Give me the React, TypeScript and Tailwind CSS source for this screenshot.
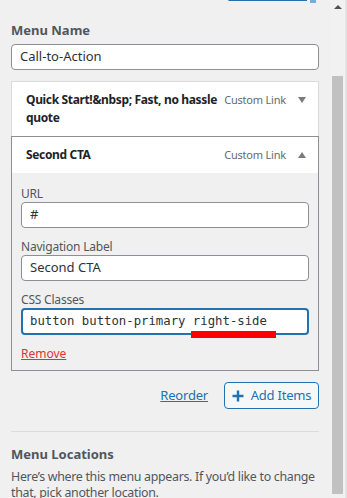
import React from "react";

const font = { fontFamily: '"Noto Sans", "Open Sans", sans-serif' };

const Field = ({ label, value, focused, mono }: { label: string; value: string; focused?: boolean; mono?: boolean }) => (
  <div className="flex flex-col">
    <label className="text-[12px] leading-[16px] text-[#50575e] tracking-[-0.2px]">{label}</label>
    <div
      className={
        "relative shrink-0 rounded-[4px] bg-white flex items-center text-[13px] text-[#2c3338] " +
        (focused ? "h-[27px] border-2 border-[#2271b1] pl-[7px]" : "h-[26px] border border-[#8c8f94] pl-[8px]")
      }
    >
      <span
        style={mono ? { fontFamily: '"DejaVu Sans Mono", "Liberation Mono", monospace' } : undefined}
        className={mono ? "text-[12.3px]" : ""}
      >
        {value}
      </span>
      {focused && <div className="absolute left-[168px] top-[21px] h-[7px] w-[85px] bg-[#ff0000]" />}
    </div>
  </div>
);

export default function App() {
  return (
    <div className="w-[347px] h-[498px] overflow-hidden bg-[#f0f0f0] flex" style={font}>
      <div className="w-[330px] flex flex-col pl-[11px] pr-[11px] *:shrink-0">
        <div className="flex justify-end items-start h-[3px] overflow-hidden pr-[3px]">
          <a className="-mt-[13px] text-[12px] text-[#2271b1] underline leading-[16px]">Menu Tutorial</a>
          <span className="-mt-[6px] ml-[3px] block w-[6px] h-[9px] bg-[#72aee6]" />
        </div>
        <div className="mt-[18px] text-[13px] font-bold text-[#50575e] leading-[18px]">Menu Name</div>
        <div className="mt-[5px] h-[26px] rounded-[4px] border border-[#8c8f94] bg-white flex items-center px-[8px] text-[13px] text-[#2c3338]">
          Call-to-Action
        </div>

        <div className="mt-[11px] flex flex-col">
          <div className="bg-white border border-[#dcdcde] border-b-0 flex items-start pl-[14px] pr-[12px] pt-[9px] pb-[9px]">
            <div className="w-[196px] text-[12px] font-bold text-[#1d2327] leading-[18px] tracking-[-0.35px]">
              Quick Start!&amp;nbsp; Fast, no hassle quote
            </div>
            <div className="flex-1" />
            <div className="text-[11px] text-[#646970] leading-[18px] tracking-[-0.2px]">Custom Link</div>
            <div className="ml-[12px] mt-[6px] w-0 h-0 border-l-[4px] border-r-[4px] border-t-[6px] border-l-transparent border-r-transparent border-t-[#787c82]" />
          </div>
          <div className="border border-[#8c8f94] flex flex-col">
            <div className="bg-white h-[36px] flex items-center pl-[14px] pr-[12px]">
              <div className="flex-1 text-[12px] font-bold text-[#1d2327] tracking-[-0.35px]">Second CTA</div>
              <div className="text-[11px] text-[#646970] tracking-[-0.2px]">Custom Link</div>
              <div className="ml-[12px] w-0 h-0 border-l-[4px] border-r-[4px] border-b-[6px] border-l-transparent border-r-transparent border-b-[#787c82]" />
            </div>
            <div className="bg-[#f0f0f0] px-[9px] pt-[13px] pb-[8px] flex flex-col gap-[11px]">
              <Field label="URL" value="#" />
              <Field label="Navigation Label" value="Second CTA" />
              <Field label="CSS Classes" value="button button-primary right-side" focused mono />
              <a className="text-[12px] text-[#d63638] underline leading-[16px]">Remove</a>
            </div>
          </div>
        </div>

        <div className="mt-[11px] flex items-center justify-end gap-[16px]">
          <a className="text-[13px] text-[#2271b1] underline tracking-[-0.2px]">Reorder</a>
          <button className="h-[27px] w-[95px] rounded-[4px] border border-[#2271b1] bg-[#f6f7f7] flex items-center justify-center gap-[7px] text-[13px] text-[#2271b1] tracking-[-0.2px]">
            <svg width="12" height="12" viewBox="0 0 12 12">
              <path d="M6 0.5v11M0.5 6h11" stroke="#2271b1" strokeWidth="2.4" />
            </svg>
            Add Items
          </button>
        </div>

        <div className="mt-[22px] border-t border-[#dcdcde]" />
        <div className="mt-[13px] text-[13px] font-bold text-[#50575e] leading-[18px]">Menu Locations</div>
        <p className="mt-[6px] text-[12.4px] leading-[16px] text-[#50575e] tracking-[-0.3px]">
          Here’s where this menu appears. If you’d like to change that, pick another location.
        </p>
      </div>
      <div className="w-[17px] flex flex-col bg-[#f1f1f1] border-r-2 border-[#e4e4e4]">
        <div className="h-[12px] flex items-center justify-center mt-[1px]">
          <div className="w-0 h-0 border-l-[4px] border-r-[4px] border-b-[4px] border-l-transparent border-r-transparent border-b-[#505050]" />
        </div>
        <div className="ml-[2px] mr-[2px] mt-[63px] h-[418px] bg-[#c1c1c1]" />
      </div>
    </div>
  );
}
